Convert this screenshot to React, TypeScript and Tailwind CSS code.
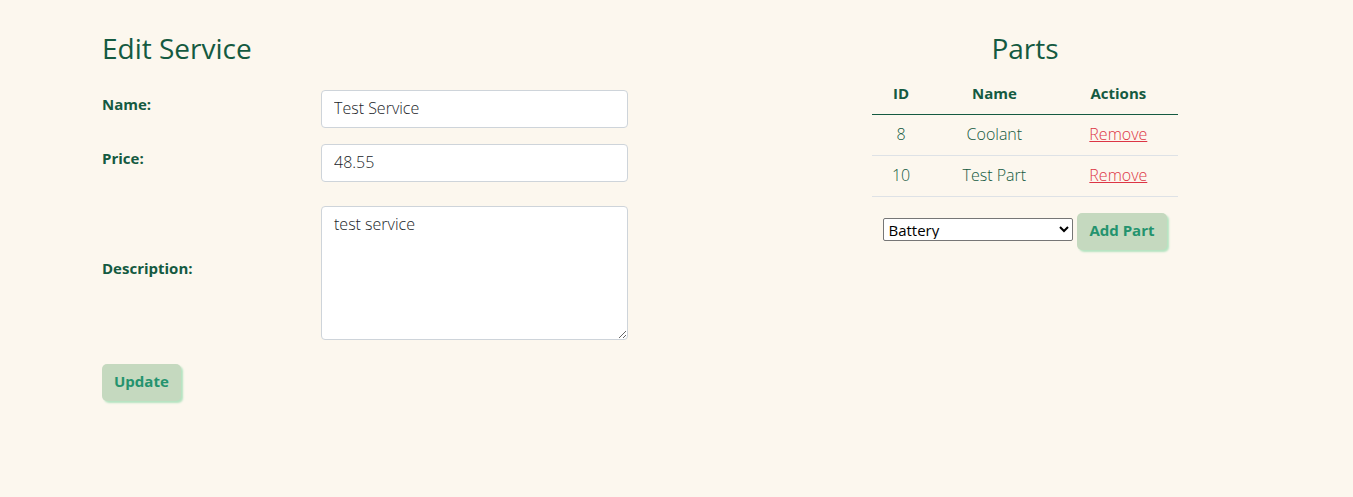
import { useState } from "react";
import type { ReactNode } from "react";

type Part = { id: number; name: string };

function ActionButton({ children, onClick }: { children: ReactNode; onClick?: () => void }) {
  return (
    <button
      type="button"
      onClick={onClick}
      className="h-[37px] shrink-0 rounded-[5px] bg-[#c5d9bf] px-3 pb-[3px] text-[15px] font-bold whitespace-nowrap text-[#24936e] shadow-[2px_2px_2px_#b5e3c0]"
    >
      {children}
    </button>
  );
}

const fieldClass =
  "block w-full rounded border border-[#ced4da] bg-white px-3 pt-[5px] pb-[7px] text-[16px] leading-6 font-light text-[#212529]";
const labelClass = "text-[15px] leading-6 font-bold";
const headingClass = "text-[28px] leading-8 font-normal";
const cellClass = "px-2 pt-[7px] pb-[9px]";

export default function App() {
  const [parts, setParts] = useState<Part[]>([
    { id: 8, name: "Coolant" },
    { id: 10, name: "Test Part" },
  ]);

  return (
    <main className="min-h-screen bg-[#fcf7ee] font-['Open_Sans','Noto_Sans',sans-serif] text-[#145a41]">
      <div className="mx-auto grid max-w-[1353px] grid-cols-[526fr_306fr] items-start gap-x-[244px] pt-8 pr-[175px] pb-8 pl-[102px]">
        <section>
          <h1 className={headingClass + " mb-[26px]"}>Edit Service</h1>
          <form>
            <div className="mb-4 grid grid-cols-[219fr_307fr]">
              <label htmlFor="name" className={labelClass + " pt-0.5"}>Name:</label>
              <input id="name" defaultValue="Test Service" className={fieldClass} />
            </div>
            <div className="mb-6 grid grid-cols-[219fr_307fr]">
              <label htmlFor="price" className={labelClass + " pt-0.5"}>Price:</label>
              <input id="price" defaultValue="48.55" className={fieldClass} />
            </div>
            <div className="mb-6 grid grid-cols-[219fr_307fr] items-center">
              <label htmlFor="description" className={labelClass + " pb-2.5"}>Description:</label>
              <textarea id="description" rows={5} defaultValue="test service" className={fieldClass} />
            </div>
            <ActionButton>Update</ActionButton>
          </form>
        </section>

        <section className="text-center">
          <h2 className={headingClass + " mb-2.5"}>Parts</h2>
          <table className="mb-4 w-full border-collapse leading-6">
            <thead>
              <tr className="border-b border-[#145a41] text-[15px] font-bold">
                <th scope="col" className={cellClass + " w-[19%]"}>ID</th>
                <th scope="col" className={cellClass + " w-[42%]"}>Name</th>
                <th scope="col" className={cellClass + " w-[39%]"}>Actions</th>
              </tr>
            </thead>
            <tbody>
              {parts.map((part) => (
                <tr key={part.id} className="border-b border-[#dee2e6] text-[16px] font-light">
                  <td className={cellClass}>{part.id}</td>
                  <td className={cellClass}>{part.name}</td>
                  <td className={cellClass}>
                    <a
                      href="#remove"
                      className="text-[#dc3545] underline"
                      onClick={(event) => {
                        event.preventDefault();
                        setParts(parts.filter((item) => item.id !== part.id));
                      }}
                    >
                      Remove
                    </a>
                  </td>
                </tr>
              ))}
            </tbody>
          </table>
          <div className="flex items-center justify-center gap-1">
            <select
              aria-label="Part"
              className="mb-1 h-[23px] w-[190px] rounded-[2px] border border-[#767676] bg-white pb-px text-[15px] font-normal text-black"
            >
              <option>Battery</option>
            </select>
            <ActionButton>Add Part</ActionButton>
          </div>
        </section>
      </div>
    </main>
  );
}
